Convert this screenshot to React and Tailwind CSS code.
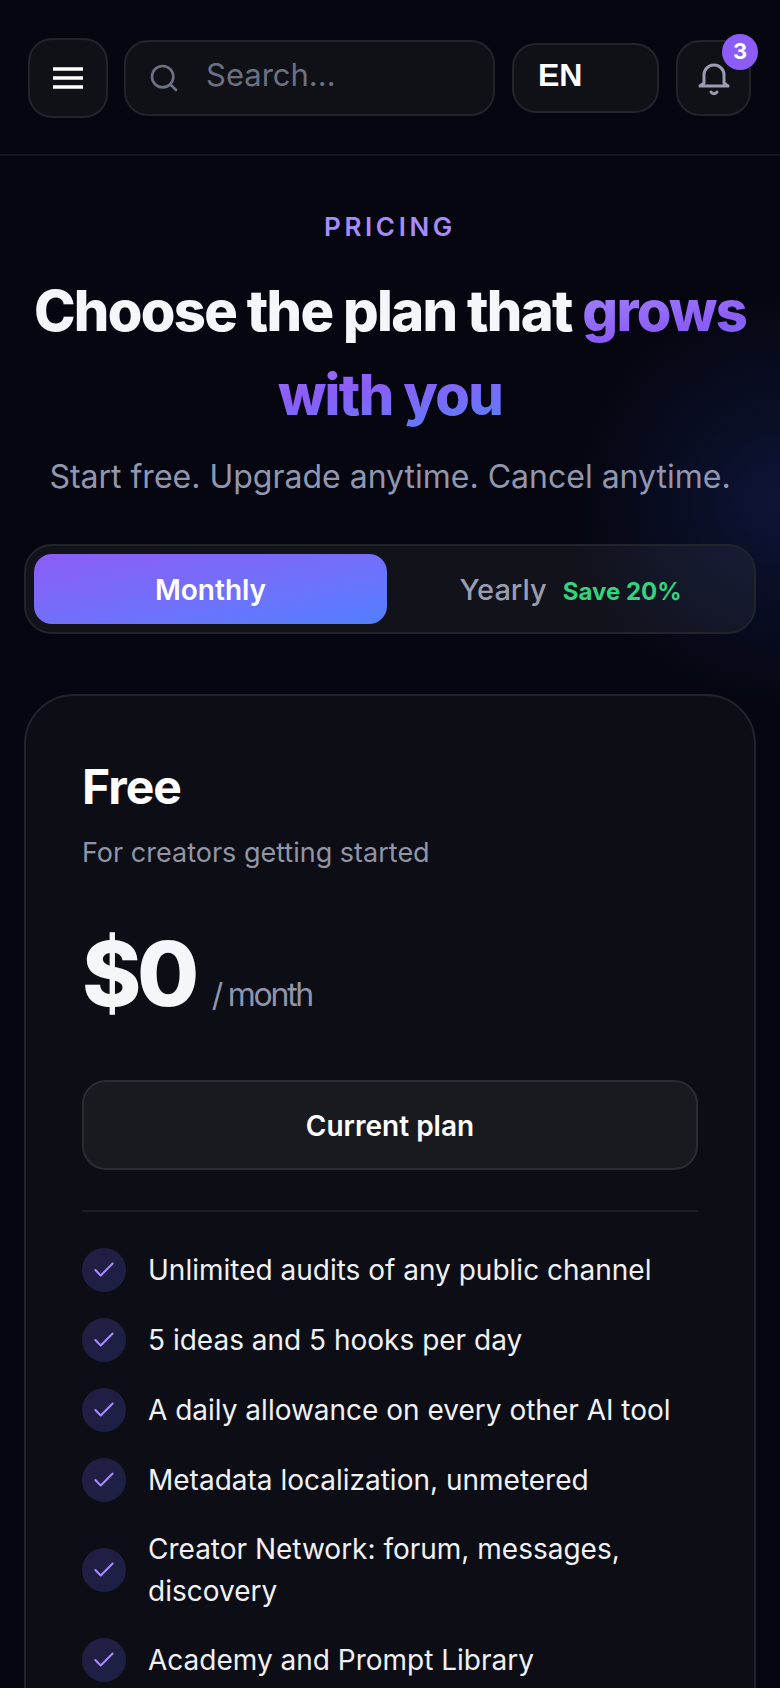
import React from 'react';
import { Search, Check } from 'lucide-react';

const FEATURES = [
  'Unlimited audits of any public channel',
  '5 ideas and 5 hooks per day',
  'A daily allowance on every other AI tool',
  'Metadata localization, unmetered',
  'Creator Network: forum, messages, discovery',
  'Academy and Prompt Library',
  'Community support',
];

function Header() {
  return (
    <header className="flex items-center h-[156px] pt-px pl-[28px] pr-[29px] border-b-2 border-[#16171e]">
      <button className="w-[80px] h-[80px] shrink-0 flex items-center justify-center rounded-[24px] border-2 border-[#23242b] bg-[#101117] text-white">
        <svg width="30" height="22" viewBox="0 0 30 22" fill="none" stroke="currentColor" strokeWidth="3.6">
          <path d="M0 2h30M0 11h30M0 20h30" />
        </svg>
      </button>
      <div className="ml-[16px] w-[371px] h-[76px] shrink-0 flex items-center pl-[22px] rounded-[24px] border-2 border-[#23242b] bg-[#101117]">
        <Search size={32} strokeWidth={2} className="text-[#6c7083]" />
        <span className="ml-[26px] text-[31px] text-[#6c7083] mt-[-4px]">Search...</span>
      </div>
      <div className="ml-[17px] w-[147px] h-[70px] shrink-0 flex items-center pl-[24px] pb-[5px] rounded-[24px] border-2 border-[#23242b] bg-[#101117] text-[32px] font-bold text-white font-['Liberation_Sans',sans-serif]">
        EN
      </div>
      <div className="relative ml-[17px] w-[75px] h-[76px] shrink-0 flex items-center justify-center rounded-[24px] border-2 border-[#23242b] bg-[#101117] text-[#9a9db0]">
        <svg width="32" height="36" viewBox="0 0 32 36" fill="none" stroke="currentColor" strokeWidth="3" strokeLinecap="round" strokeLinejoin="round" className="mt-[4px]">
          <path d="M6 21V13a10 10 0 0 1 20 0v8l4 3H2z" />
          <path d="M13 30a3.5 3.5 0 0 0 6 0" />
        </svg>
        <span className="absolute right-[-9px] top-[-8px] w-[36px] h-[36px] rounded-full bg-[#8b5cf6] flex items-center justify-center text-[22px] font-bold text-white">3</span>
      </div>
    </header>
  );
}

function Toggle() {
  return (
    <div className="mx-[24px] mt-[43px] h-[90px] flex items-center p-[8px] rounded-[28px] border-2 border-[#23242b] bg-white/[0.05]">
      <div className="w-[353px] h-[70px] flex items-center justify-center pt-[2px] rounded-[18px] bg-gradient-to-br from-[#8b5cf6] to-[#4f7fff] text-[28px] font-semibold text-white">
        Monthly
      </div>
      <div className="flex-1 flex items-center justify-center gap-[16px] pl-[8px] pt-[2px]">
        <span className="text-[29px] font-medium text-[#9a9db0]">Yearly</span>
        <span className="text-[24px] font-bold text-[#34d37f] mt-[4px]">Save 20%</span>
      </div>
    </div>
  );
}

function FreeCard() {
  return (
    <section className="mx-[24px] mt-[60px] rounded-[50px] border-2 border-[#23242b] bg-[#0d0e15] px-[56px] pt-[57px]">
      <h2 className="text-[48px] leading-[68px] font-bold tracking-[-0.02em] text-white">Free</h2>
      <p className="mt-[11px] text-[27px] leading-[42px] text-[#9095a8]">For creators getting started</p>
      <div className="mt-[40px] flex items-baseline">
        <span className="text-[90px] leading-[120px] font-extrabold tracking-[-0.05em] text-[#f5f6fa]">$0</span>
        <span className="ml-[17px] text-[32px] tracking-[-0.07em] text-[#8f95ad]">/ month</span>
      </div>
      <button className="mt-[46px] w-full h-[90px] pt-px rounded-[24px] border-2 border-[#2b2c33] bg-[#191a20] text-[28px] font-semibold text-white">
        Current plan
      </button>
      <div className="mt-[40px] h-[2px] bg-[#1e1f26]" />
      <ul className="mt-[36px] flex flex-col gap-[26px]">
        {FEATURES.map(text => (
          <li key={text} className="flex items-center gap-[22px] text-[28px] leading-[42px] text-[#f0f1f5]">
            <span className="w-[44px] h-[44px] shrink-0 rounded-full bg-gradient-to-br from-[#241d42] to-[#1b2045] flex items-center justify-center text-[#a78bfa]">
              <Check size={26} strokeWidth={1.9} />
            </span>
            {text}
          </li>
        ))}
      </ul>
    </section>
  );
}

export default function App() {
  return (
    <div className="relative h-[1688px] w-[780px] overflow-hidden bg-[#05060f] font-['Inter',sans-serif]">
      <div className="absolute right-[-210px] top-[290px] w-[420px] h-[420px] rounded-full bg-[radial-gradient(closest-side,#0d1436,transparent)]" />
      <div className="relative">
        <Header />
        <div className="pt-[51px] text-center">
          <p className="text-[26px] leading-[40px] font-semibold tracking-[0.14em] text-[#a78bfa]">PRICING</p>
          <h1 className="mt-[22px] px-[24px] text-[56px] leading-[84px] font-extrabold tracking-[-0.03em] text-[#f5f6fa]">
            Choose the plan that{' '}
            <span className="bg-gradient-to-br from-[#a78bfa] via-[#8b5cf6] to-[#4f7fff] bg-clip-text text-transparent">grows with you</span>
          </h1>
          <p className="mt-[16px] text-[32px] leading-[48px] text-[#9297b0]">Start free. Upgrade anytime. Cancel anytime.</p>
        </div>
        <Toggle />
        <FreeCard />
      </div>
    </div>
  );
}
